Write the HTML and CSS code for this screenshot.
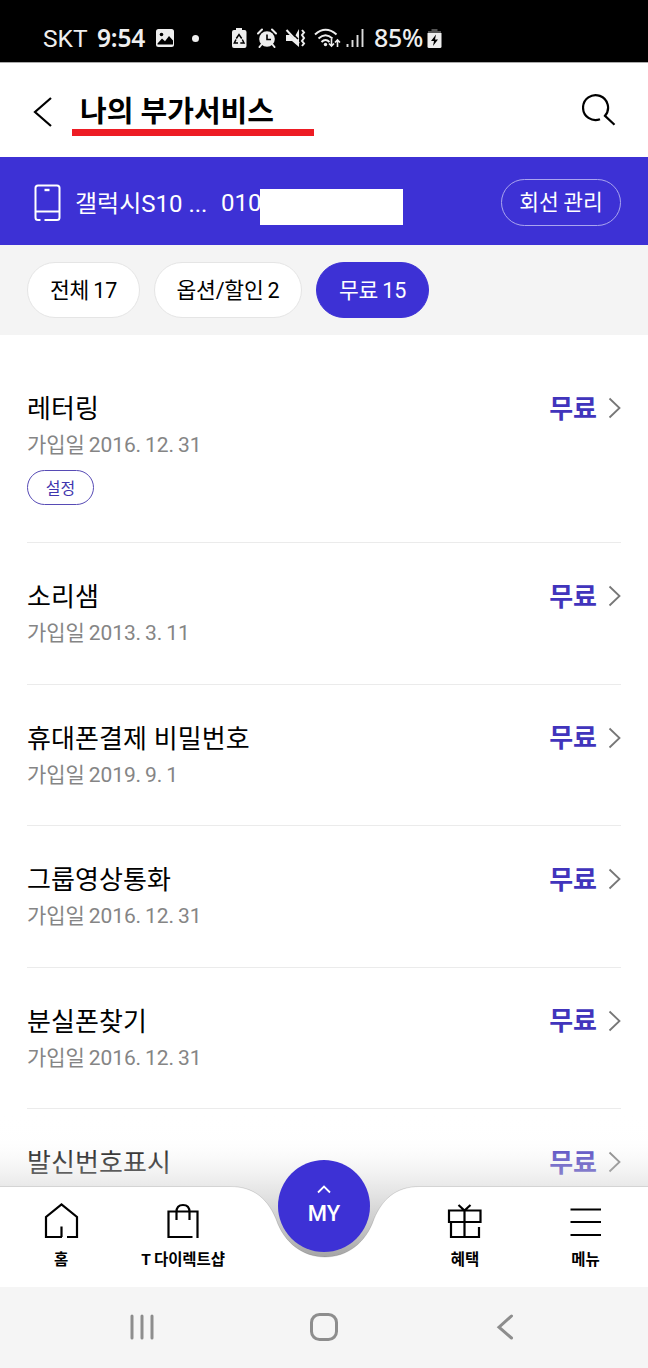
FILE: index.html
```html
<!DOCTYPE html>
<html lang="ko">
<head>
<meta charset="utf-8">
<title>나의 부가서비스</title>
<link rel="stylesheet" href="styles.css">
</head>
<body>
<div class="phone">
  <div class="status">
    <span class="carrier">SKT</span>
    <span class="clock">9:54</span>
    <svg class="st-photo" width="20" height="20" viewBox="0 0 20 20"><rect x="1" y="1" width="18" height="18" rx="2.5" fill="#eee"/><circle cx="6.5" cy="6.5" r="1.8" fill="#000"/><path d="M2.5 15.5 7 10.5l3 2.8L14 8l4 4.5v4H2.500z" fill="#000"/></svg>
    <span class="st-dot"></span>
    <svg class="st-recycle" width="16" height="22" viewBox="0 0 16 22"><path d="M5 1h6v2h2.500q2 0 2 2v14q0 2-2 2H3q-2 0-2-2V5q0-2 2-2h2z" fill="#eee"/><path d="M5.300 11.500 8 7.500l2.700 4M11.300 12.500 13 16H9.300M7 16H3.300L5 12.500" fill="none" stroke="#000" stroke-width="1.500"/></svg>
    <svg class="st-alarm" width="20" height="20" viewBox="0 0 20 20"><circle cx="10" cy="11" r="7.800" fill="#eee"/><path d="M1 5.500 5 1.500M19 5.500 15 1.500M4.500 16.500 2.500 19M15.500 16.500l2 2.500" stroke="#eee" stroke-width="2" stroke-linecap="round"/><path d="M10 6.500v5h4" fill="none" stroke="#000" stroke-width="1.600"/></svg>
    <svg class="st-mute" width="21" height="20" viewBox="0 0 21 20"><path d="M1 7h4l4 4v-1L14 1v18L7 13H1z" fill="#eee"/><path d="M3 1 13 11" stroke="#000" stroke-width="1.500"/><path d="M1.500 2 14 15.500" stroke="#eee" stroke-width="2"/><path d="M17 2l2 2.500-2 2.500 2 3-2 3 2 2.500-2 2.500" fill="none" stroke="#eee" stroke-width="2"/></svg>
    <svg class="st-wifi" width="27" height="20" viewBox="0 0 27 20"><g fill="none" stroke="#eee" stroke-width="2"><path d="M1 6.500Q11.500-3 22.500 6.500"/><path d="M4.500 10.500q7-6.500 14 0"/><path d="M7.500 14q4-4 8 0"/><path stroke-width="1.600" d="M17.500 11v7M15 15.500l2.500 2.500 2.500-2.500M23.500 19v-7M21 14.500l2.500-2.500 2.500 2.500"/></g><circle cx="11.500" cy="16.500" r="1.700" fill="#eee"/></svg>
    <svg class="st-signal" width="18" height="20" viewBox="0 0 18 20"><path d="M1.500 16v3M6.500 12v7M11.500 7v12M16.500 1v18" stroke="#ddd" stroke-width="1.900"/></svg>
    <span class="battery">85%</span>
    <svg class="st-batt" width="15" height="21" viewBox="0 0 15 21"><path d="M4.500 1h6v2H14v2.500H1V3h3.500z" fill="#555"/><path d="M.5 5h14v13.500q0 1.500-1.500 1.500H2q-1.500 0-1.500-1.500z" fill="#eee"/><path d="M9 6.500 4 13h3l-1 5 5-6.500H8z" fill="#000"/></svg>
  </div>

  <header class="header">
    <svg class="back" width="20" height="32" viewBox="0 0 20 32"><path d="M18 2 2 16 18 30" fill="none" stroke="#000" stroke-width="2.200"/></svg>
    <h1 class="title">나의 부가서비스</h1>
    <svg class="search" width="34" height="34" viewBox="0 0 34 34"><path d="M18 26.300A12.500 12.500 0 1 1 23 22.800L32.500 31.800" fill="none" stroke="#000" stroke-width="2.200"/></svg>
  </header>

  <section class="line">
    <svg class="device" width="27" height="38" viewBox="0 0 27 38"><path d="M6.500 36H4Q1.500 36 1.500 33.500V4Q1.500 1.500 4 1.500H23Q25.500 1.500 25.500 4V33.500Q25.500 36 23 36H10.500M1.500 27.500H25.500" fill="none" stroke="#fff" stroke-width="2"/><path d="M10.500 6h5" stroke="#fff" stroke-width="2.400"/></svg>
    <span class="model">갤럭시S10 ...</span>
    <span class="number">010</span>
    <span class="mask"></span>
    <button class="manage">회선 관리</button>
  </section>

  <nav class="filters">
    <button class="chip chip-all">전체 17</button>
    <button class="chip chip-option">옵션/할인 2</button>
    <button class="chip chip-free">무료 15</button>
  </nav>

  <ul class="list">
    <li class="item item-tall">
      <div class="info"><h2 class="name">레터링</h2><p class="date">가입일 2016. 12. 31</p><button class="setting">설정</button></div>
      <div class="price"><span>무료</span><svg class="arrow" width="13" height="22" viewBox="0 0 13 22"><path d="M1.500 1.500 11.500 11 1.500 20.500"/></svg></div>
    </li>
    <li class="item">
      <div class="info"><h2 class="name">소리샘</h2><p class="date">가입일 2013. 3. 11</p></div>
      <div class="price"><span>무료</span><svg class="arrow" width="13" height="22" viewBox="0 0 13 22"><path d="M1.500 1.500 11.500 11 1.500 20.500"/></svg></div>
    </li>
    <li class="item">
      <div class="info"><h2 class="name">휴대폰결제 비밀번호</h2><p class="date">가입일 2019. 9. 1</p></div>
      <div class="price"><span>무료</span><svg class="arrow" width="13" height="22" viewBox="0 0 13 22"><path d="M1.500 1.500 11.500 11 1.500 20.500"/></svg></div>
    </li>
    <li class="item">
      <div class="info"><h2 class="name">그룹영상통화</h2><p class="date">가입일 2016. 12. 31</p></div>
      <div class="price"><span>무료</span><svg class="arrow" width="13" height="22" viewBox="0 0 13 22"><path d="M1.500 1.500 11.500 11 1.500 20.500"/></svg></div>
    </li>
    <li class="item">
      <div class="info"><h2 class="name">분실폰찾기</h2><p class="date">가입일 2016. 12. 31</p></div>
      <div class="price"><span>무료</span><svg class="arrow" width="13" height="22" viewBox="0 0 13 22"><path d="M1.500 1.500 11.500 11 1.500 20.500"/></svg></div>
    </li>
    <li class="item">
      <div class="info"><h2 class="name">발신번호표시</h2></div>
      <div class="price"><span>무료</span><svg class="arrow" width="13" height="22" viewBox="0 0 13 22"><path d="M1.500 1.500 11.500 11 1.500 20.500"/></svg></div>
    </li>
  </ul>

  <div class="dock">
    <svg class="dock-bg" width="648" height="177" viewBox="0 1110 648 177">
      <defs><linearGradient id="shade" x1="0" y1="1110" x2="0" y2="1260" gradientUnits="userSpaceOnUse"><stop offset="0" stop-color="#fff" stop-opacity="0"/><stop offset=".2" stop-color="#f9f9f9" stop-opacity=".1"/><stop offset=".5" stop-color="#d8d8d8" stop-opacity=".55"/><stop offset="1" stop-color="#a0a0a0" stop-opacity="1"/></linearGradient></defs>
      <rect x="0" y="1110" width="648" height="150" fill="url(#shade)"/>
      <path d="M-2 1186.500H230C255 1186.500 268 1200 276 1219 284 1243 303 1257 325 1257S366 1243 374 1219C382 1200 395 1186.500 420 1186.500H650V1290H-2z" fill="#fff" stroke="#000" stroke-opacity=".13"/>
    </svg>
    <div class="tabs">
      <div class="tab"><svg width="36" height="38" viewBox="0 0 36 38"><path d="M18.500 35V24.500M19 35H3V15L18.500 2.500 34 15V35H24" fill="none" stroke="#000" stroke-width="2.200"/></svg><span>홈</span></div>
      <div class="tab"><svg width="36" height="38" viewBox="0 0 36 38"><path d="M27.500 35H3.500V9.500H32.500V36M11.500 18V10Q11.500 3 18 3T24.500 10V18" fill="none" stroke="#000" stroke-width="2.200"/></svg><span>T 다이렉트샵</span></div>
      <button class="my"><svg width="14" height="9" viewBox="0 0 14 9"><path d="M1 7.500 7 1.500 13 7.500" fill="none" stroke="#fff" stroke-width="1.800"/></svg><span>MY</span></button>
      <div class="tab"><svg width="36" height="38" viewBox="0 0 36 38"><path d="M2 8.500H33.500V20H2zM17.500 8.500V35M4 20V35H32V25M11.500 3 17.500 8.500 23.500 3" fill="none" stroke="#000" stroke-width="2.200"/></svg><span>혜택</span></div>
      <div class="tab tab-menu"><svg width="36" height="38" viewBox="0 0 36 38"><path d="M2.500 7.500H33M2.500 20H33M2.500 33H33" fill="none" stroke="#000" stroke-width="2.200"/></svg><span>메뉴</span></div>
    </div>
  </div>

  <footer class="system">
    <svg width="28" height="28" viewBox="0 0 28 28"><path d="M4 3V25M14 3V25M24 3V25"/></svg>
    <svg width="28" height="28" viewBox="0 0 28 28"><rect x="1.500" y="1.500" width="25" height="25" rx="8"/></svg>
    <svg width="28" height="28" viewBox="0 0 28 28"><path d="M20.500 3 8 14.200 20.500 25"/></svg>
  </footer>
</div>
</body>
</html>
```

FILE: styles.css
```css
* { box-sizing: border-box; }
body { margin: 0; background: #fff; font-family: Roboto, "Noto Sans CJK KR", sans-serif; color: #000; }
h1, h2, p, ul { margin: 0; padding: 0; font-weight: 400; }
button { font-family: inherit; padding: 0; border: 0; background: none; white-space: nowrap; }
svg { display: block; flex: none; }
.phone { position: relative; width: 648px; height: 1368px; overflow: hidden; display: flex; flex-direction: column; }

.status { flex: none; height: 63px; background: #000; border-bottom: 1px solid #aaa; display: flex; align-items: center; padding: 14px 0 0 43px; color: #eee; white-space: nowrap; }
.carrier { width: 54px; font-size: 24.500px; }
.clock { width: 58px; margin-top: -2px; font: 600 24.500px "Noto Sans", sans-serif; letter-spacing: -0.2px; }
.st-dot { width: 7px; height: 7px; border-radius: 50%; background: #eee; margin-left: 17px; }
.st-recycle { margin-left: 32px; }
.st-alarm { margin-left: 10px; }
.st-mute { margin-left: 8px; }
.st-wifi { margin-left: 8px; }
.st-signal { margin-left: 5px; }
.battery { width: 53px; margin: -2px 0 0 10px; font: 500 25px "Noto Sans", sans-serif; letter-spacing: -0.3px; }

.header { flex: none; height: 94px; display: flex; align-items: center; padding: 3px 32px 0 33px; }
.title { width: 242px; height: 44px; margin-left: 19px; padding-left: 8px; border-bottom: 7px solid #ed1c24; font-size: 29px; font-weight: 700; line-height: 41px; margin-top: 4px; white-space: nowrap; }
.search { margin-left: auto; margin-top: -4px; }

.line { flex: none; height: 88px; background: #3d31d5; color: #fff; display: flex; align-items: center; padding: 3px 27px 0 34px; font-size: 24px; white-space: nowrap; }
.model { width: 146px; margin: -3px 0 0 14px; }
.number { width: 39px; }
.mask { width: 143px; height: 36px; background: #fff; margin-top: 8px; }
.manage { width: 120px; height: 47px; margin-left: auto; padding-bottom: 4px; border: 1px solid #aaa5ef; border-radius: 24px; color: #fff; font-size: 21.500px; word-spacing: -1px; }

.filters { flex: none; height: 90px; background: #f4f4f4; display: flex; align-items: center; padding-left: 27px; }
.chip { height: 56px; padding-bottom: 4px; border: 1px solid #e5e5e5; border-radius: 28px; background: #fff; color: #000; font-size: 21.500px; word-spacing: -1px; letter-spacing: -0.2px; }
.chip-all { width: 113px; }
.chip-option { width: 148px; margin-left: 14px; }
.chip-free { width: 113px; margin-left: 14px; background: #3d31d5; border-color: #3d31d5; color: #fff; }

.list { flex: 1; min-height: 0; overflow: hidden; list-style: none; padding: 20px 27px 0; }
.item { height: 141.500px; display: flex; justify-content: space-between; padding-top: 35px; border-bottom: 1px solid #ebebeb; }
.item-tall { height: 188px; }
.name { font-size: 26px; line-height: 38px; letter-spacing: 0.1px; }
.date { margin-top: 2px; font-size: 21px; line-height: 30px; word-spacing: -1px; letter-spacing: -0.1px; color: #858585; }
.setting { display: block; width: 67px; height: 35px; margin-top: 10px; padding-bottom: 2px; border: 1.500px solid #574bb5; border-radius: 18px; color: #4034ae; font-size: 16px; }
.price { height: 36px; display: flex; align-items: center; gap: 11px; font-size: 26px; font-weight: 700; color: #4134bc; }
.price span { margin-top: -4px; }
.arrow path { fill: none; stroke: #777; stroke-width: 1.800; }

.dock { position: absolute; left: 0; bottom: 81px; width: 648px; height: 177px; }
.tabs { position: absolute; inset: 76px 0 0; display: grid; grid-template-columns: 122px 122px 160px 122px 122px; }
.tab { display: flex; flex-direction: column; align-items: center; padding-top: 16px; font-size: 15.500px; font-weight: 700; line-height: 20px; gap: 10px; white-space: nowrap; letter-spacing: -0.1px; }
.tab-menu { padding-right: 3px; }
.my { justify-self: center; width: 92px; height: 92px; margin-top: -26px; border-radius: 50%; background: #3d31d5; color: #fff; display: flex; flex-direction: column; align-items: center; padding-top: 25px; font-size: 22px; font-weight: 500; line-height: 28px; gap: 6px; }

.system { flex: none; height: 81px; background: #f5f5f5; display: flex; align-items: center; justify-content: space-between; padding: 0 129px 2px 128px; }
.system svg { fill: none; stroke: #8d8d8d; stroke-width: 3; stroke-linecap: round; }
```
